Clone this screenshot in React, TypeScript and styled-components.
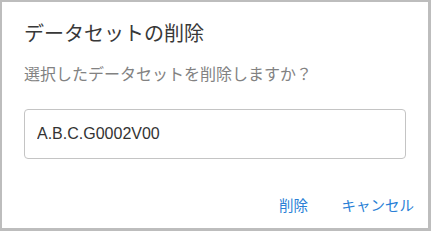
import styled, { createGlobalStyle } from 'styled-components';

const GlobalStyle = createGlobalStyle`
  html, body {
    margin: 0;
    padding: 0;
    background: #fff;
  }
  body {
    font-family: Roboto, "Noto Sans CJK JP", sans-serif;
  }
`;

const Dialog = styled.div`
  box-sizing: border-box;
  width: 431px;
  height: 231px;
  background: #fff;
  border-style: solid;
  border-color: #bdbdbd;
  border-width: 2px 3px 3px 2px;
  display: flex;
  flex-direction: column;
`;

const Title = styled.h2`
  margin: 0;
  padding: 16px 22px 0;
  font-family: Roboto, "Noto Sans CJK JP", sans-serif;
  font-size: 20px;
  font-weight: 400;
  line-height: 32px;
  color: #383838;
`;

const Body = styled.div`
  padding: 13px 22px 0;
  display: flex;
  flex-direction: column;
  gap: 22px;
`;

const Message = styled.p`
  margin: 0;
  font-size: 16px;
  line-height: 24px;
  color: #828282;
`;

const Input = styled.input`
  box-sizing: border-box;
  width: 382px;
  height: 50px;
  margin: 0;
  padding: 0 12px;
  border: 1px solid #c4c4c4;
  border-radius: 4px;
  font-family: "Liberation Sans", Arial, sans-serif;
  font-size: 16px;
  color: #333;
  background: #fff;
  outline: none;
`;

const Actions = styled.div`
  margin-top: auto;
  padding: 0 6px 6px;
  display: flex;
  justify-content: flex-end;
  gap: 8px;
`;

const TextButton = styled.button`
  min-width: 64px;
  height: 36px;
  padding: 0 8px;
  border: 0;
  border-radius: 4px;
  background: transparent;
  font-family: Roboto, "Noto Sans CJK JP", sans-serif;
  font-size: 14.5px;
  color: #2a7fd6;
  cursor: pointer;
`;

export default function App() {
  return (
    <>
      <GlobalStyle />
      <Dialog>
        <Title>データセットの削除</Title>
        <Body>
          <Message>選択したデータセットを削除しますか？</Message>
          <Input defaultValue="A.B.C.G0002V00" readOnly />
        </Body>
        <Actions>
          <TextButton>削除</TextButton>
          <TextButton>キャンセル</TextButton>
        </Actions>
      </Dialog>
    </>
  );
}
